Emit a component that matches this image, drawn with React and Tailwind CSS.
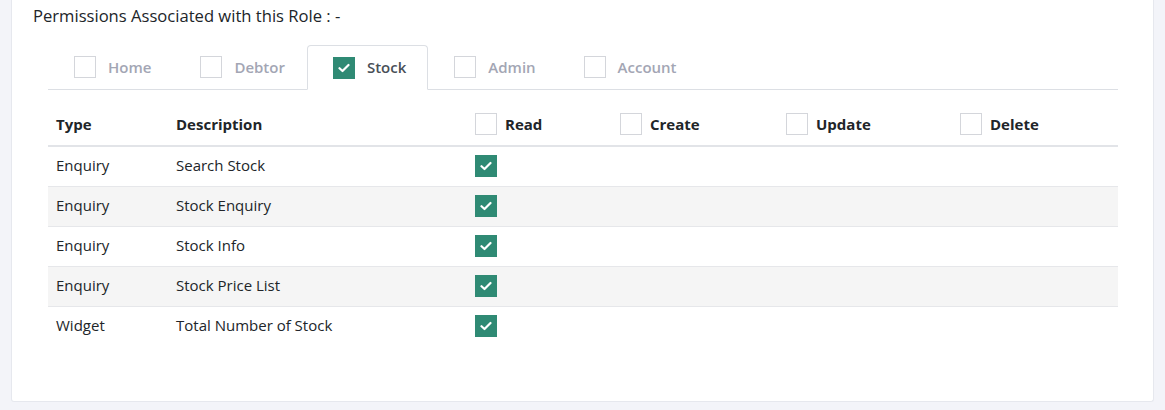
import React from "react";

const Check = ({ checked }) =>
  checked ? (
    <span className="flex h-[22px] w-[22px] shrink-0 items-center justify-center bg-[#2f8a74]">
      <svg width="12" height="10" viewBox="0 0 12 10" fill="none">
        <path d="M1.5 5.2 L4.5 8 L10.5 2" stroke="white" strokeWidth="2.2" strokeLinecap="round" strokeLinejoin="round" />
      </svg>
    </span>
  ) : (
    <span className="block h-[22px] w-[22px] shrink-0 border border-[#d4d6db] bg-white" />
  );

const tabs = [
  { name: "Home", checked: false, pr: "pr-[22px]" },
  { name: "Debtor", checked: false, pr: "pr-[21px]" },
  { name: "Stock", checked: true, active: true, pr: "pr-[21px]" },
  { name: "Admin", checked: false, pr: "pr-[21px]" },
  { name: "Account", checked: false, pr: "pr-[21px]" },
];

const rows = [
  ["Enquiry", "Search Stock"],
  ["Enquiry", "Stock Enquiry"],
  ["Enquiry", "Stock Info"],
  ["Enquiry", "Stock Price List"],
  ["Widget", "Total Number of Stock"],
];

export default function App() {
  return (
    <div
      className="h-[410px] w-[1165px] overflow-hidden bg-[#f3f4f9] pl-[11px] pr-[11px]"
      style={{ fontFamily: '"Open Sans", sans-serif' }}
    >
      <div className="h-[402px] w-[1143px] rounded-b-[3px] border border-t-0 border-[#e6e8ee] bg-white">
        <div className="pl-[21px] pt-[4px] text-[16.6px] leading-[24px] text-[#212529]">
          Permissions Associated with this Role : -
        </div>
        <div className="ml-[36px] mr-[35px] mt-[17px]">
          <div className="flex h-[45px] border-b border-[#dcdfe4]">
            {tabs.map((t) => (
              <div
                key={t.name}
                className={
                  (t.active
                    ? "-mb-px flex items-center gap-[12px] rounded-t-[4px] border border-b-white border-[#dcdfe4] bg-white pl-[25px] "
                    : "flex items-center gap-[12px] border border-transparent pl-[25px] ") + t.pr
                }
              >
                <Check checked={t.checked} />
                <span
                  className={
                    t.active
                      ? "text-[15px] font-semibold text-[#495057]"
                      : "text-[15px] font-semibold text-[#a3a6b4]"
                  }
                >
                  {t.name}
                </span>
              </div>
            ))}
          </div>
          <table className="mt-[10px] w-full table-fixed border-collapse text-[15px] text-[#212529]">
            <colgroup>
              <col className="w-[120px]" />
              <col className="w-[299px]" />
              <col className="w-[145px]" />
              <col className="w-[166px]" />
              <col className="w-[174px]" />
              <col />
            </colgroup>
            <thead>
              <tr className="h-[46px] border-b-2 border-[#e2e4e8]">
                <th className="px-[8px] pt-[3px] text-left font-bold">Type</th>
                <th className="px-[8px] pt-[3px] text-left font-bold">Description</th>
                {["Read", "Create", "Update", "Delete"].map((h) => (
                  <th key={h} className="px-[8px] pt-[3px] text-left font-bold">
                    <div className="flex items-center gap-[8px]">
                      <Check checked={false} />
                      <span>{h}</span>
                    </div>
                  </th>
                ))}
              </tr>
            </thead>
            <tbody>
              {rows.map((r, i) => (
                <tr
                  key={i}
                  className={
                    (i % 2 === 1 ? "bg-[#f5f5f5] " : "bg-white ") +
                    (i < rows.length - 1 ? "h-[40px] border-b border-[#e6e7ea]" : "h-[40px]")
                  }
                >
                  <td className="px-[8px] pb-[2px]">{r[0]}</td>
                  <td className="px-[8px] pb-[2px]">{r[1]}</td>
                  <td className="px-[8px]">
                    <div className="flex items-center">
                      <Check checked />
                    </div>
                  </td>
                  <td />
                  <td />
                  <td />
                </tr>
              ))}
            </tbody>
          </table>
        </div>
      </div>
    </div>
  );
}
